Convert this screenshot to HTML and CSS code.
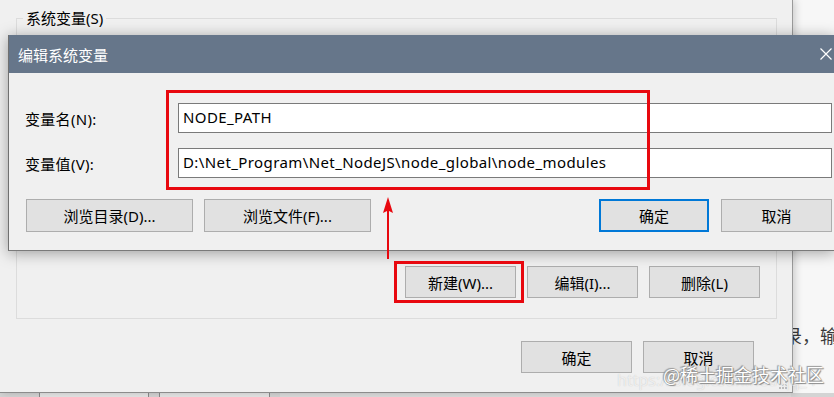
FILE: index.html
```html
<!DOCTYPE html>
<html>

<head>
    <title>编辑系统变量</title>
    <link rel="stylesheet" href="styles.css">
</head>

<body>
    <div class="desktop">
        <!-- janela de fundo: Variáveis de ambiente -->
        <div class="env-window">
            <fieldset class="group">
                <legend>系统变量(S)</legend>
                <div class="var-list"></div>
                <div class="group-buttons">
                    <button class="win-btn">新建(W)...</button>
                    <button class="win-btn">编辑(I)...</button>
                    <button class="win-btn">删除(L)</button>
                </div>
            </fieldset>
            <div class="footer-buttons">
                <button class="win-btn">确定</button>
                <button class="win-btn">取消</button>
            </div>
            <svg class="grip" width="9" height="9" viewBox="0 0 9 9">
                <rect x="6" y="0" width="2" height="2" fill="#bdbdbd" />
                <rect x="3" y="3" width="2" height="2" fill="#bdbdbd" />
                <rect x="6" y="3" width="2" height="2" fill="#bdbdbd" />
                <rect x="0" y="6" width="2" height="2" fill="#bdbdbd" />
                <rect x="3" y="6" width="2" height="2" fill="#bdbdbd" />
                <rect x="6" y="6" width="2" height="2" fill="#bdbdbd" />
            </svg>
        </div>
        <div class="side-page">
            <span class="side-text">录，输入</span>
        </div>
    </div>

    <div class="under-window">
        <span class="stub stub-a"></span>
        <span class="stub stub-b"></span>
        <span class="stub stub-c"></span>
    </div>

    <!-- diálogo em primeiro plano -->
    <div class="dialog">
        <div class="title-bar">
            <span class="title">编辑系统变量</span>
            <svg class="close-icon" width="12" height="12" viewBox="0 0 12 12">
                <path d="M0.5 0.5 L11.5 11.5 M11.5 0.5 L0.5 11.5" stroke="#ffffff" stroke-width="1.2" fill="none" />
            </svg>
        </div>
        <div class="dialog-body">
            <div class="fields">
                <label class="field-label">变量名(N):</label>
                <div class="field-input">NODE_PATH</div>
                <label class="field-label">变量值(V):</label>
                <div class="field-input">D:\Net_Program\Net_NodeJS\node_global\node_modules</div>
            </div>
            <div class="dialog-buttons">
                <button class="win-btn wide">浏览目录(D)...</button>
                <button class="win-btn wide">浏览文件(F)...</button>
                <span class="spacer"></span>
                <button class="win-btn default">确定</button>
                <button class="win-btn">取消</button>
            </div>
        </div>
    </div>

    <!-- marcações vermelhas -->
    <div class="mark mark-fields"></div>
    <div class="mark mark-new"></div>
    <svg class="mark-arrow" width="14" height="64" viewBox="0 0 14 64">
        <path d="M7 1 L12 17 L8 15 L8 63 L6 63 L6 15 L2 17 Z" fill="#e8080f" />
    </svg>

    <div class="watermark">
        <span class="wm-url">https://blog.csdn.net/qq_4</span>
        <span class="wm-text">@稀土掘金技术社区</span>
    </div>
</body>

</html>
```

FILE: styles.css
```css
body {
    margin: 0;
    width: 834px;
    height: 397px;
    overflow: hidden;
    position: relative;
    background-color: #f7f7f7;
    font-family: "Noto Sans", "Noto Sans CJK SC", sans-serif;
    font-size: 15px;
    color: #000;
}

.desktop {
    display: flex;
    height: 393px;
}

.env-window {
    position: relative;
    width: 792px;
    height: 392px;
    flex: none;
    background-color: #f0f0f0;
    border-right: 1px solid #9a9a9a;
    border-bottom: 1px solid #8c8c8c;
    box-shadow: 2px 0 8px rgba(0, 0, 0, 0.18);
    z-index: 1;
}

.group {
    margin: 8px 15px 0 16px;
    padding: 0 16px 20px 6px;
    border: 1px solid #dcdcdc;
}

.group legend {
    padding: 0 3px;
    line-height: 20px;
}

.var-list {
    height: 238px;
}

.group-buttons {
    display: flex;
    justify-content: flex-end;
    gap: 11px;
}

.win-btn {
    width: 111px;
    height: 32px;
    padding: 0;
    background-color: #e1e1e1;
    border: 1px solid #adadad;
    font-family: "Noto Sans", "Noto Sans CJK SC", sans-serif;
    font-size: 15px;
    color: #000;
}

.footer-buttons {
    display: flex;
    justify-content: flex-end;
    gap: 11px;
    margin-top: 22px;
    padding-right: 38px;
}

.grip {
    position: absolute;
    right: 4px;
    bottom: 2px;
}

.side-page {
    flex: 1;
    overflow: hidden;
    padding-top: 322px;
}

.side-text {
    display: block;
    margin-left: -9px;
    white-space: nowrap;
    font-family: "Noto Sans CJK SC", sans-serif;
    font-size: 18px;
    color: #3a3a3a;
}

.under-window {
    display: flex;
    height: 4px;
    background-color: #d4d4d4;
}

.stub {
    display: block;
    height: 4px;
    background-color: #e6e6e6;
    border-left: 1px solid #8a8a8a;
    border-right: 1px solid #8a8a8a;
}

.stub-a {
    width: 108px;
    margin-left: 39px;
}

.stub-b {
    width: 109px;
    margin-left: 10px;
}

.stub-c {
    width: 511px;
    margin-left: 10px;
    background-color: #dcdcdc;
    border: none;
}

/* diálogo */
.dialog {
    position: absolute;
    left: 8px;
    top: 35px;
    width: 826px;
    background-color: #f0f0f0;
    border-left: 1px solid #707070;
    border-bottom: 1px solid #7a7a7a;
    box-shadow: 0 2px 14px rgba(0, 0, 0, 0.35);
    z-index: 2;
}

.title-bar {
    display: flex;
    align-items: center;
    justify-content: space-between;
    height: 38px;
    padding: 0 3px 0 9px;
    background-color: #66768a;
}

.title {
    font-family: "Noto Sans CJK SC", sans-serif;
    font-size: 15px;
    color: #fff;
}

.dialog-body {
    padding: 30px 3px 18px 17px;
}

.fields {
    display: grid;
    grid-template-columns: 152px 1fr;
    grid-auto-rows: 30px;
    row-gap: 15px;
    align-items: center;
}

.field-label {
    margin-left: -1px;
    letter-spacing: 0.3px;
}

.field-input {
    height: 28px;
    line-height: 27px;
    padding-left: 4px;
    background-color: #fff;
    border: 1px solid #7a7a7a;
    white-space: nowrap;
    letter-spacing: 0.4px;
}

.dialog-buttons {
    display: flex;
    gap: 11px;
    margin-top: 21px;
}

.dialog-buttons .win-btn {
    height: 33px;
}

.dialog-buttons .wide {
    width: 167px;
}

.spacer {
    flex: 1;
}

.dialog-buttons .default {
    width: 110px;
    border: 2px solid #0078d7;
    margin-right: 1px;
}

/* marcações */
.mark {
    position: absolute;
    border: 3px solid #e8080f;
    z-index: 3;
}

.mark-fields {
    left: 166px;
    top: 90px;
    width: 478px;
    height: 94px;
}

.mark-new {
    left: 394px;
    top: 261px;
    width: 124px;
    height: 36px;
}

.mark-arrow {
    position: absolute;
    left: 381px;
    top: 196px;
    z-index: 3;
}

.watermark {
    position: absolute;
    left: 614px;
    top: 361px;
    width: 215px;
    height: 30px;
    z-index: 4;
}

.wm-url {
    position: absolute;
    left: 3px;
    top: 8px;
    font-family: "Noto Sans", sans-serif;
    font-size: 16px;
    color: rgba(255, 255, 255, 0.7);
    text-shadow: 0 0 1px rgba(120, 120, 120, 0.4);
    white-space: nowrap;
}

.wm-text {
    position: absolute;
    left: 49px;
    top: 0;
    font-family: "Noto Sans CJK SC", sans-serif;
    font-size: 18px;
    color: #ffffff;
    text-shadow: 0 0 1px #777, 1px 1px 1px #888, -1px -1px 1px #999;
    white-space: nowrap;
}
```
